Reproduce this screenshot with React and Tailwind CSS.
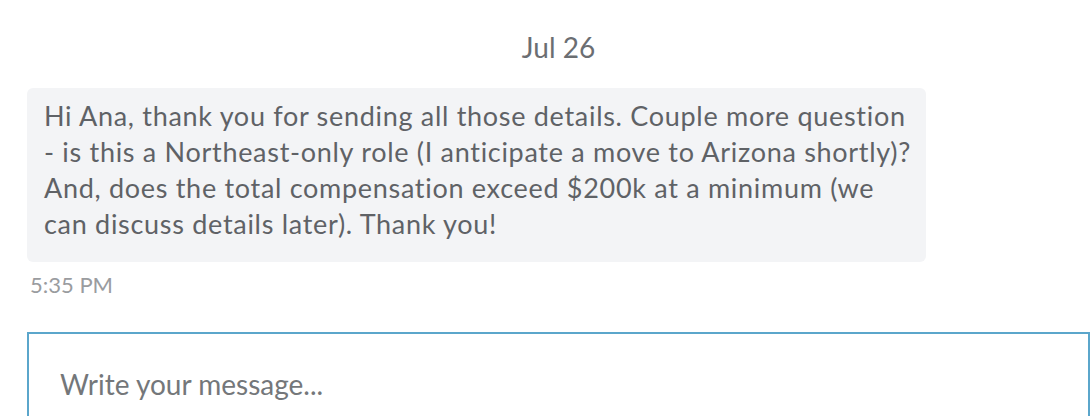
export default function App() {
  return (
    <div className="h-[416px] w-[1092px] overflow-hidden bg-white font-['Lato','Noto_Sans',sans-serif]">
      <div className="ml-[27px] mr-[2px] flex flex-col">
        <div className="pt-[30px] text-center text-[28px] leading-[34px] text-[#6b6e72]">Jul 26</div>
        <div className="mt-[24px] w-[899px] whitespace-nowrap rounded-[6px] bg-[#f3f4f6] px-[17px] pt-[10px] pb-[20px] text-[27px] leading-[36px] tracking-[0.7px] text-[#5f6266]">
          Hi Ana, thank you for sending all those details. Couple more question
          <br />- is this a Northeast-only role (I anticipate a move to Arizona shortly)?
          <br />And, does the total compensation exceed $200k at a minimum (we
          <br />can discuss details later). Thank you!
        </div>
        <div className="mt-[11px] pl-[3px] text-[22px] leading-[24px] text-[#9a9c9f]">5:35 PM</div>
        <div className="mt-[35px] h-[120px] border-2 border-[#5ba6cb] px-[31px] pt-[33px] text-[28px] leading-[34px] text-[#74777a]">
          Write your message...
        </div>
      </div>
    </div>
  );
}
